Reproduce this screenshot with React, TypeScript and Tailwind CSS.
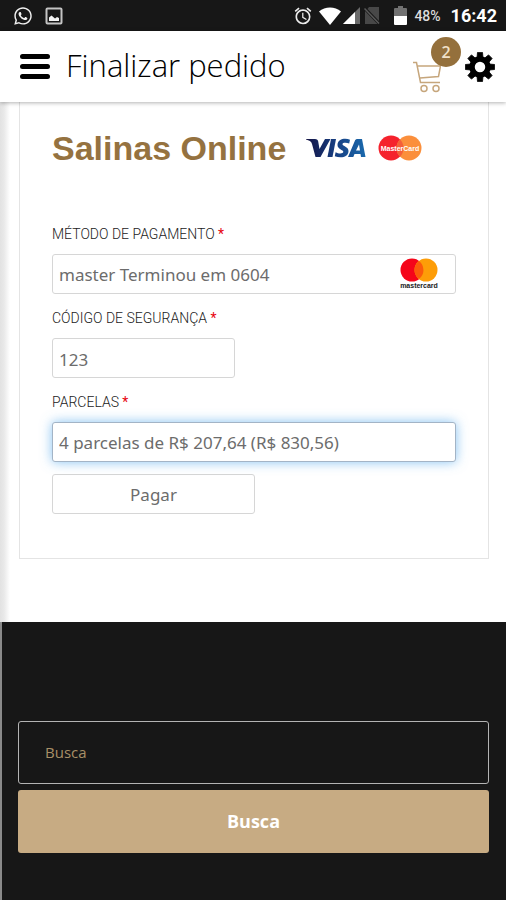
import type { ReactNode } from "react";
import { FaWhatsapp } from "react-icons/fa";
import { MdAlarm } from "react-icons/md";

const openSans = "font-['Open_Sans','Noto_Sans',sans-serif]";
const notoSans = "font-['Noto_Sans','Open_Sans',sans-serif]";
const roboto = "font-['Roboto',sans-serif]";

function PictureIcon() {
  return (
    <svg width="18" height="18" viewBox="0 0 18 18" aria-hidden="true">
      <rect x="1.5" y="1.5" width="15" height="15" rx="1" fill="none" stroke="#c4c4c4" strokeWidth="2" />
      <path d="M4 14V10.5L6.5 8.5L10 11.5L12 10L14 11V14Z" fill="#f4f4f4" />
    </svg>
  );
}

function WifiIcon() {
  return (
    <svg width="22" height="18" viewBox="0 0 22 18" aria-hidden="true">
      <path d="M0 4.5C6-1 16-1 22 4.5L11 18Z" fill="#fff" />
    </svg>
  );
}

function SignalIcon() {
  return (
    <svg width="17" height="17" viewBox="0 0 17 17" aria-hidden="true">
      <path d="M17 0V17H0Z" fill="#6a6a6a" />
      <path d="M12 5V17H0Z" fill="#fff" />
    </svg>
  );
}

function NoSimIcon() {
  return (
    <svg width="16" height="17" viewBox="0 0 16 17" aria-hidden="true">
      <path d="M5 0H15V14L3.5 2Z" fill="#484848" />
      <path d="M1 4L13.5 17H1Z" fill="#484848" />
      <path d="M0.5 1.5L15 16.500" stroke="#5a5a5a" strokeWidth="1.5" />
    </svg>
  );
}

function BatteryIcon() {
  return (
    <svg width="13" height="19" viewBox="0 0 13 19" aria-hidden="true">
      <path d="M4 0H9V2H12A1 1 0 0 1 13 3V10H0V3A1 1 0 0 1 1 2H4Z" fill="#717171" />
      <path d="M0 10H13V18A1 1 0 0 1 12 19H1A1 1 0 0 1 0 18Z" fill="#fff" />
    </svg>
  );
}

function StatusBar() {
  return (
    <div className={`flex h-[31px] items-center justify-between bg-[#171717] pr-[9px] pl-[13px] text-white ${roboto}`}>
      <div className="flex items-center gap-3">
        <FaWhatsapp className="size-5 text-[#f0f0f0]" />
        <PictureIcon />
      </div>
      <div className="flex items-center">
        <MdAlarm className="size-5 text-[#ececec]" />
        <span className="ml-1.5 flex items-center gap-0.5">
          <WifiIcon />
          <SignalIcon />
        </span>
        <span className="ml-1">
          <NoSimIcon />
        </span>
        <span className="ml-3.5">
          <BatteryIcon />
        </span>
        <span className="ml-[7px] text-sm font-medium text-[#dcdcdc]">48%</span>
        <span className="ml-2.5 text-lg font-bold">16:42</span>
      </div>
    </div>
  );
}

function CartIcon() {
  return (
    <svg width="28" height="32" viewBox="0 0 28 32" fill="none" stroke="#c6a67c" strokeWidth="1.500" aria-hidden="true">
      <path d="M0 1.500H3.500L7.500 21.500H27" />
      <path d="M4.500 5H27.500L25.500 15.500L7 17" />
      <circle cx="11" cy="27.500" r="3" />
      <circle cx="23" cy="27.500" r="3" />
    </svg>
  );
}

function GearIcon() {
  const angles = [0, 45, 90, 135, 180, 225, 270, 315];
  return (
    <svg width="30" height="30" viewBox="-15 -15 30 30" aria-hidden="true">
      <circle r="8" fill="none" stroke="#000" strokeWidth="5.500" />
      {angles.map((a) => (
        <path key={a} d="M-3-9L-2.500-14.600H2.500L3-9Z" transform={`rotate(${a})`} fill="#000" stroke="#000" strokeWidth="0.800" strokeLinejoin="round" />
      ))}
    </svg>
  );
}

function Header() {
  return (
    <header className={`relative flex h-[71px] items-center bg-white pr-[11px] pl-5 shadow-[0_1px_4px_rgba(0,0,0,0.3)] ${openSans}`}>
      <button type="button" aria-label="Menu" className="flex w-[30px] flex-col gap-[5px]">
        <span className="h-[5px] rounded-sm bg-black" />
        <span className="h-[5px] rounded-sm bg-black" />
        <span className="h-[5px] rounded-sm bg-black" />
      </button>
      <h1 className="ml-4 flex-1 pb-1 text-[31px] leading-10 font-light text-black">Finalizar pedido</h1>
      <a href="#carrinho" aria-label="Carrinho" className="relative mt-5 mr-6">
        <CartIcon />
        <span className="absolute -top-6 left-[18px] flex size-[30px] items-center justify-center rounded-full bg-[#94703c] text-base font-semibold text-[#f0e0c8]">
          2
        </span>
      </a>
      <button type="button" aria-label="Ajustes">
        <GearIcon />
      </button>
    </header>
  );
}

function VisaLogo() {
  return (
    <svg width="60" height="24" viewBox="0 0 60 24" role="img" aria-label="Visa">
      <defs>
        <linearGradient id="visa" x1="0" x2="60" y1="0" y2="0" gradientUnits="userSpaceOnUse">
          <stop offset="0" stopColor="#141445" />
          <stop offset="0.500" stopColor="#173f82" />
          <stop offset="1" stopColor="#1a6aae" />
        </linearGradient>
      </defs>
      <g fill="url(#visa)">
        <path d="M0 3H9C11 3 12 4 12.2 5.5L13.5 13L19 3H24.5L14.5 21H9.5L6 8C5.500 5.500 3 4.300 0 3.500Z" />
        <path d="M25 3H30L26.500 21H21.500Z" />
        <path d="M44 3.800L43.200 7.500C40.500 6.300 36.500 6.300 36.500 8.200C36.500 10.300 42.500 10.400 42.500 15C42.500 21.500 34.500 22.500 28.800 20.200L29.600 16.300C33 18.200 37.300 17.800 37.300 15.800C37.300 13.800 31.500 13.300 31.500 9C31.500 2.800 39.500 1.600 44 3.800Z" />
        <path fillRule="evenodd" d="M51.500 3H56L59.500 21H55L54.500 18H48.500L47.300 21H42L49 4.500C49.500 3.500 50.300 3 51.500 3ZM53 8.500L50 14.500H54Z" />
      </g>
    </svg>
  );
}

function MasterCardBadge() {
  return (
    <svg width="44" height="26" viewBox="0 0 44 26" role="img" aria-label="MasterCard">
      <circle cx="13" cy="13" r="12.500" fill="#f5222d" />
      <circle cx="31" cy="13" r="12.500" fill="#fb8f3c" />
      <path d="M22 4.300A12.500 12.500 0 0 1 22 21.700A12.500 12.500 0 0 1 22 4.300Z" fill="#f4603a" />
      <text x="22" y="16" textAnchor="middle" fontSize="7" fontWeight="700" fill="#fff" fontFamily="Liberation Sans, sans-serif">
        MasterCard
      </text>
    </svg>
  );
}

function MastercardLogo() {
  return (
    <svg width="38" height="32" viewBox="0 0 38 32" role="img" aria-label="mastercard">
      <circle cx="12" cy="12" r="11.500" fill="#f5051a" />
      <circle cx="26" cy="12" r="11.500" fill="#fd9d08" />
      <path d="M19 2.900A11.500 11.500 0 0 1 19 21.100A11.500 11.500 0 0 1 19 2.900Z" fill="#fb5a0b" />
      <text x="19" y="30" textAnchor="middle" fontSize="7" fontWeight="700" fill="#222" fontFamily="Liberation Sans, sans-serif">
        mastercard
      </text>
    </svg>
  );
}

const box = `h-10 rounded-[3px] border bg-white px-1.5 pt-0.5 text-[17px] text-[#6c6c6c] ${notoSans}`;

function Field({ id, label, children }: { id: string; label: string; children: ReactNode }) {
  return (
    <div className="flex flex-col gap-2.5">
      <label htmlFor={id} className={`text-sm leading-5 font-light text-[#222] uppercase ${roboto}`}>
        {label} <span className="font-normal text-red-600">*</span>
      </label>
      {children}
    </div>
  );
}

function PaymentCard() {
  return (
    <section className="mr-[17px] ml-[19px] border border-t-0 border-[#e4e4e4] bg-white px-8 pt-[26px] pb-11">
      <div className="flex h-10 items-center">
        <h2 className="font-['Liberation_Sans',Arial,sans-serif] text-[34px] leading-10 font-bold text-[#957240]">Salinas Online</h2>
        <span className="ml-5 flex items-center gap-3">
          <VisaLogo />
          <MasterCardBadge />
        </span>
      </div>
      <form className="mt-14" onSubmit={(e) => e.preventDefault()}>
        <div className="flex flex-col gap-3.5">
          <Field id="metodo" label="Método de pagamento">
            <div className="relative">
              <select id="metodo" className={`${box} block w-full appearance-none border-[#d6d6d6]`}>
                <option>master Terminou em 0604</option>
              </select>
              <span className="pointer-events-none absolute top-1 right-[18px]">
                <MastercardLogo />
              </span>
            </div>
          </Field>
          <Field id="codigo" label="Código de segurança">
            <input id="codigo" type="text" defaultValue="123" className={`${box} w-[183px] border-[#d6d6d6]`} />
          </Field>
          <Field id="parcelas" label="Parcelas">
            <select id="parcelas" className={`${box} w-full appearance-none border-[#a3b4c6] shadow-[0_0_12px_rgba(82,168,236,0.7)]`}>
              <option>4 parcelas de R$ 207,64 (R$ 830,56)</option>
            </select>
          </Field>
        </div>
        <button type="submit" className={`${box} mt-3 block w-[203px] border-[#d6d6d6]`}>
          Pagar
        </button>
      </form>
    </section>
  );
}

function SearchFooter() {
  return (
    <footer className={`mt-[63px] flex-1 border-l-2 border-[#8a8a8a] bg-[#171717] pt-[99px] pr-[17px] pb-10 pl-4 ${openSans}`}>
      <form className="flex flex-col gap-1.5" onSubmit={(e) => e.preventDefault()}>
        <input
          type="search"
          aria-label="Busca"
          placeholder="Busca"
          className={`h-[63px] w-full appearance-none rounded-[3px] border border-[#b4b4b4] bg-transparent px-[26px] pb-0.5 text-[15px] text-[#a89067] placeholder:text-[#a89067] ${openSans}`}
        />
        <button type="submit" className="h-[63px] rounded-[3px] bg-[#c7ab83] pb-0.5 text-lg font-bold text-white">
          Busca
        </button>
      </form>
    </footer>
  );
}

export default function App() {
  return (
    <div className="flex min-h-screen flex-col bg-[linear-gradient(to_right,#e2e2e2,#e9e9e9_4px,#fff_10px)]">
      <StatusBar />
      <Header />
      <main>
        <PaymentCard />
      </main>
      <SearchFooter />
    </div>
  );
}
